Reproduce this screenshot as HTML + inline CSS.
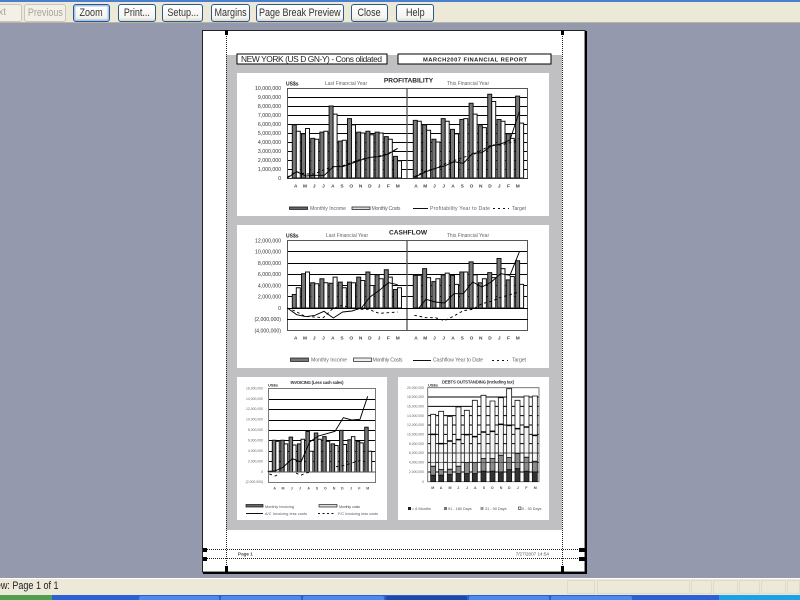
<!DOCTYPE html>
<html><head><meta charset="utf-8"><style>
html,body{margin:0;padding:0;width:800px;height:600px;overflow:hidden;background:#9499ad;font-family:"Liberation Sans",sans-serif}
.bt{position:absolute;top:0;left:0;width:800px;height:23px;background:#ece9d8;border-top:2px solid #4a7fd0;box-sizing:border-box;border-bottom:1px solid #b8b6a8}
.b{position:absolute;top:4px;height:18px;box-sizing:border-box;border:1px solid #2a5a8c;border-radius:3px;background:linear-gradient(#fff,#f4f3ee 80%,#dcd8c8);font-size:11px;line-height:16px;color:#333;filter:blur(.35px);white-space:nowrap;display:flex;justify-content:center;overflow:hidden}
.b span{display:inline-block;flex:none;transform:scaleX(.82)}
.d{color:#a8a698;border-color:#c9c7ba;background:#f3f1e7}
.z{box-shadow:inset 0 0 0 1.5px #a9c4ea}
svg{position:absolute;left:0;top:0}
svg.s{filter:blur(.3px)}
.g path,.g line{vector-effect:non-scaling-stroke}
text{font-family:"Liberation Sans",sans-serif;fill:#333}
.y{font-size:5.2px;text-anchor:end;fill:#777}
.m{font-size:4.8px;font-weight:bold;text-anchor:middle;fill:#444}
.l{font-size:5.2px;fill:#666}
.t{font-size:5px;fill:#666;text-anchor:middle}
.h{font-size:6.6px;font-weight:bold;text-anchor:middle;fill:#222}
.st{position:absolute;left:0;top:578px;width:800px;height:17px;background:#ece9d8;border-top:1px solid #fff;box-sizing:border-box;font-size:11px;line-height:15px;color:#222;overflow:hidden}
.p{position:absolute;top:1px;height:14px;border:1px solid #dedbcb;box-sizing:border-box}
.tk{position:absolute;left:0;top:595px;width:800px;height:5px;background:#2a62d6;overflow:hidden}
.tb{position:absolute;top:1px;height:4px;background:#4c8aec;border-radius:2px 2px 0 0}
</style></head><body>
<div class="bt"></div>
<div class="b d" style="left:-20px;width:42px"><span style="position:absolute;right:15px;transform:none;font-size:10px">Next</span></div>
<div class="b d" style="left:24px;width:42px"><span>Previous</span></div>
<div class="b z" style="left:73px;width:37px"><span>Zoom</span></div>
<div class="b" style="left:118px;width:38px"><span>Print...</span></div>
<div class="b" style="left:162px;width:41px"><span>Setup...</span></div>
<div class="b" style="left:211px;width:39px"><span>Margins</span></div>
<div class="b" style="left:256px;width:88px"><span>Page Break Preview</span></div>
<div class="b" style="left:351px;width:37px"><span>Close</span></div>
<div class="b" style="left:396px;width:38px"><span>Help</span></div>

<svg width="800" height="600" viewBox="0 0 800 600">
<rect x="202.5" y="30.5" width="382.5" height="541.5" fill="#fff" stroke="#222"/>
<path d="M586 31V573H203" fill="none" stroke="#000" stroke-width="2"/>
</svg>
<svg class="s" width="800" height="600" viewBox="0 0 800 600">
<rect x="226" y="55" width="336" height="475" fill="#c0bfc2"/>
<rect x="237" y="54" width="150" height="10" fill="#fff" stroke="#000"/>
<rect x="398" y="54" width="153" height="10" fill="#fff" stroke="#000"/>
<text x="241" y="62" font-size="8.4" textLength="141" style="fill:#222">NEW YORK (US D GN-Y) - Cons olidated</text>
<text x="423" y="61.5" font-size="5.8" font-weight="bold" textLength="104" style="fill:#222">MARCH2007 FINANCIAL REPORT</text>
<rect x="237" y="73" width="312" height="143" fill="#fff"/>
<rect x="237" y="225" width="312" height="143" fill="#fff"/>
<rect x="237" y="377" width="150" height="143" fill="#fff"/>
<rect x="398" y="377" width="151" height="143" fill="#fff"/>

<!-- CHART 1 -->
<path d="M287 169.5H528M287 160.5H528M287 151.500H528M287 142.500H528M287 133.500H528M287 124.500H528M287 115.500H528M287 106.500H528M287 97.500H528" stroke="#000" stroke-width="1"/>
<rect x="287.500" y="88.500" width="240" height="90" fill="none" stroke="#555"/>
<g class="g" transform="translate(0,178) scale(1,-9)" stroke="#111">
<path fill="#777" d="M292.3 0V5.9h4V0zM301.5 0V4.9h4V0zM310.7 0V4.4h4V0zM319.9 0V5.1h4V0zM329.1 0V8h4V0zM338.3 0V4.1h4V0zM347.5 0V6.6h4V0zM356.7 0V5.1h4V0zM365.9 0V5.2h4V0zM375.1 0V5.1h4V0zM384.3 0V4.6h4V0zM393.5 0V2.4h4V0zM413.3 0V6.4h4V0zM422.6 0V5.9h4V0zM431.9 0V4.3h4V0zM441.2 0V6.6h4V0zM450.5 0V5.4h4V0zM459.8 0V6.5h4V0zM469.1 0V8.3h4V0zM478.4 0V5.8h4V0zM487.7 0V9.3h4V0zM497 0V6.5h4V0zM506.3 0V4.9h4V0zM515.6 0V9.1h4V0z"/>
<path fill="#fafafa" d="M296.3 0V5.2h4V0zM305.5 0V5.5h4V0zM314.7 0V4.3h4V0zM323.9 0V5.2h4V0zM333.1 0V7.1h4V0zM342.3 0V4.2h4V0zM351.5 0V5.9h4V0zM360.7 0V5h4V0zM369.9 0V4.8h4V0zM379.1 0V5h4V0zM388.3 0V4.3h4V0zM397.5 0V1.9h4V0zM417.3 0V6.3h4V0zM426.6 0V5.3h4V0zM435.9 0V4h4V0zM445.2 0V6.3h4V0zM454.5 0V4.9h4V0zM463.8 0V6.6h4V0zM473.1 0V7.1h4V0zM482.4 0V5.6h4V0zM491.7 0V8.5h4V0zM501 0V6.3h4V0zM510.3 0V4.4h4V0zM519.6 0V6.1h4V0z"/>
</g>
<path d="M407 88V178" stroke="#555" stroke-width="1.3"/>
<path d="M287 178.5H528" stroke="#333" stroke-width="1"/>
<g transform="translate(230,70) scale(.3333)" fill="none" stroke="#000">
<path stroke-width="2.8" d="M172 324L200 305 228 318 255 316 283 316 310 290 338 290 366 280 394 270 420 262 448 260 476 252 503 235M553 322L588 305 616 295 644 288 672 275 700 280 728 250 756 248 784 228 812 222 840 210 868 125"/>
<path stroke-width="2.8" stroke-dasharray="8 8" d="M172 322L197 305 225 312 253 312 280 300 308 290 336 288 364 278 392 268 420 262 448 258 476 250 503 235M553 320L588 303 616 296 644 282 672 272 700 262 728 255 756 240 784 225 812 225 840 218 868 205"/>
</g>
<g class="y"><text x="281" y="90">10,000,000</text><text x="281" y="99">9,000,000</text><text x="281" y="108">8,000,000</text><text x="281" y="117">7,000,000</text><text x="281" y="126">6,000,000</text><text x="281" y="135">5,000,000</text><text x="281" y="144">4,000,000</text><text x="281" y="153">3,000,000</text><text x="281" y="162">2,000,000</text><text x="281" y="171">1,000,000</text><text x="281" y="180">0</text></g>
<text class="m" y="187.6" x="295.7 305 314.2 323.5 332.8 342 351.3 360.6 369.9 379.1 388.4 397.7 416 425.2 434.5 443.7 453 462.2 471.5 480.7 490 499.2 508.5 517.7">AMJJASONDJFMAMJJASONDJFM</text>
<text x="286" y="85.5" font-size="5" font-weight="bold" style="fill:#222">US$s</text>
<text class="t" x="346" y="85">Last Financial Year</text>
<text class="t" x="468" y="85">This Financial Year</text>
<text class="h" x="408.5" y="82.5">PROFITABILITY</text>
<rect x="289.5" y="207" width="18" height="2.4" fill="#666" stroke="#111" stroke-width=".8"/>
<text class="l" x="310" y="210" textLength="36">Monthly Income</text>
<rect x="352" y="207" width="18" height="2.4" fill="#ddd" stroke="#222" stroke-width=".8"/>
<text class="l" x="371.5" y="210" textLength="29">Monthly Costs</text>
<path d="M413 208.5H428" stroke="#111"/>
<text class="l" x="430" y="210" textLength="60">Profitability Year to Date</text>
<path d="M493 208.5H509" stroke="#111" stroke-dasharray="2 3"/>
<text class="l" x="512" y="210" textLength="14">Target</text>

<!-- CHART 2 -->
<path d="M287 319.500H528M287 308.500H528M287 296.500H528M287 285.500H528M287 274.500H528M287 263.500H528M287 251.500H528" stroke="#000" stroke-width="1"/>
<rect x="287.500" y="240.500" width="240" height="90" fill="none" stroke="#555"/>
<g class="g" transform="translate(0,308) scale(1,-5.625)" stroke="#111">
<path fill="#777" d="M292.3 0V2.4h4V0zM301.5 0V6.1h4V0zM310.7 0V4.5h4V0zM319.9 0V5.2h4V0zM329.1 0V4.4h4V0zM338.3 0V4.6h4V0zM347.5 0V4.6h4V0zM356.7 0V5.5h4V0zM365.9 0V6.4h4V0zM375.1 0V5.9h4V0zM384.3 0V6.8h4V0zM393.5 0V3.3h4V0zM413.3 0V5.8h4V0zM422.6 0V7h4V0zM431.9 0V4.7h4V0zM441.2 0V5.9h4V0zM450.5 0V5.8h4V0zM459.8 0V6.4h4V0zM469.1 0V8.2h4V0zM478.4 0V4.5h4V0zM487.7 0V6.3h4V0zM497 0V8.8h4V0zM506.3 0V5h4V0zM515.6 0V8.4h4V0z"/>
<path fill="#fafafa" d="M296.3 0V3.6h4V0zM305.5 0V6.4h4V0zM314.7 0V4.3h4V0zM323.9 0V4.5h4V0zM333.1 0V5.5h4V0zM342.3 0V3.6h4V0zM351.5 0V4.5h4V0zM360.7 0V4.9h4V0zM369.9 0V4h4V0zM379.1 0V5.2h4V0zM388.3 0V5.5h4V0zM397.5 0V3.6h4V0zM417.3 0V5.8h4V0zM426.6 0V5.4h4V0zM435.9 0V5.2h4V0zM445.2 0V6.2h4V0zM454.5 0V4.2h4V0zM463.8 0V6.4h4V0zM473.1 0V5.9h4V0zM482.4 0V5.2h4V0zM491.7 0V5.4h4V0zM501 0V7h4V0zM510.3 0V5.6h4V0zM519.6 0V4.2h4V0z"/>
</g>
<path d="M407 240.5V330.5" stroke="#555" stroke-width="1.3"/>
<path d="M287 308.5H528M287 319.5H528" stroke="#000" stroke-width="1"/>
<g transform="translate(230,222) scale(.3333)" fill="none" stroke="#000">
<path stroke-width="2.8" d="M172 258L200 278 228 284 255 280 282 268 310 288 338 270 366 267 394 258 420 225 448 205 476 182 503 188M553 258L567 258 588 232 616 240 644 243 672 215 700 215 728 180 756 195 784 180 812 155 840 160 868 90"/>
<path stroke-width="2.8" stroke-dasharray="8 8" d="M172 258L197 268 225 283 253 285 280 287 308 260 336 250 364 258 392 262 420 262 430 268 448 274 476 272 503 270M553 280L588 287 616 287 644 296 672 282 700 266 728 262 756 245 784 238 812 226 840 218 868 210"/>
</g>
<g class="y"><text x="281" y="242.5">12,000,000</text><text x="281" y="253.7">10,000,000</text><text x="281" y="265">8,000,000</text><text x="281" y="276.2">6,000,000</text><text x="281" y="287.5">4,000,000</text><text x="281" y="298.7">2,000,000</text><text x="281" y="310">0</text><text x="281" y="321.2">(2,000,000)</text><text x="281" y="332.5">(4,000,000)</text></g>
<text class="m" y="339.6" x="295.7 305 314.2 323.5 332.8 342 351.3 360.6 369.9 379.1 388.4 397.7 416 425.2 434.5 443.7 453 462.2 471.5 480.7 490 499.2 508.5 517.7">AMJJASONDJFMAMJJASONDJFM</text>
<text x="286" y="237.5" font-size="5" font-weight="bold" style="fill:#222">US$s</text>
<text class="t" x="347" y="237">Last Financial Year</text>
<text class="t" x="468" y="237">This Financial Year</text>
<text class="h" x="408" y="234.5">CASHFLOW</text>
<rect x="290.5" y="358" width="18" height="3.5" fill="#777" stroke="#111" stroke-width=".7"/>
<text class="l" x="311" y="361.5" textLength="36">Monthly Income</text>
<rect x="353.5" y="358" width="18" height="3.5" fill="#eee" stroke="#222" stroke-width=".7"/>
<text class="l" x="372.5" y="361.5" textLength="30">Monthly Costs</text>
<path d="M413 360.5H431" stroke="#111"/>
<text class="l" x="433" y="361.5" textLength="50">Cashflow Year to Date</text>
<path d="M492 360.5H508" stroke="#111" stroke-dasharray="2 3"/>
<text class="l" x="512" y="361.5" textLength="14">Target</text>

<!-- CHART 3 -->
<path d="M268 461.5H376M268 451.5H376M268 440.5H376M268 430.5H376M268 420.5H376M268 409.5H376M268 399.5H376M268 388.5H376" stroke="#000" stroke-width="1"/>
<rect x="268.5" y="388.5" width="107" height="94" fill="none" stroke="#777"/>
<g class="g" transform="translate(0,472) scale(1,-5.2)" stroke="#111">
<path fill="#777" d="M272.3 0V6.1h3.5V0zM280.7 0V6.1h3.5V0zM289.1 0V6.7h3.5V0zM297.5 0V5.4h3.5V0zM305.9 0V7.8h3.5V0zM314.3 0V7.5h3.5V0zM322.7 0V6.8h3.5V0zM331.1 0V5.4h3.5V0zM339.5 0V8h3.5V0zM347.9 0V6.2h3.5V0zM356.3 0V5.9h3.5V0zM364.7 0V8.6h3.5V0z"/>
<path fill="#fafafa" d="M275.8 0V5.9h3.5V0zM284.2 0V5.4h3.5V0zM292.6 0V5.2h3.5V0zM301 0V6.3h3.5V0zM309.4 0V4h3.5V0zM317.8 0V6.3h3.5V0zM326.2 0V5.9h3.5V0zM334.6 0V5.1h3.5V0zM343 0V5.3h3.5V0zM351.4 0V6.8h3.5V0zM359.8 0V5.6h3.5V0zM368.2 0V4h3.5V0z"/>
</g>
<path d="M268 472H376" stroke="#555" stroke-width="1"/>
<g transform="translate(230,372) scale(.3333)" fill="none" stroke="#000">
<path stroke-width="2.8" d="M113 298L135 297 160 285 187 260 213 270 239 210 265 192 290 185 315 178 340 137 365 144 390 142 413 73"/>
<path stroke-width="2.8" stroke-dasharray="8 9" d="M118 306L135 312 150 305M198 303L212 310 228 303 242 300M318 284L345 280 375 270 400 263"/>
</g>
<g font-size="3.4" text-anchor="end">
<text x="263" y="389.5" style="fill:#666">16,000,000</text><text x="263" y="399.8" style="fill:#666">14,000,000</text><text x="263" y="410.2" style="fill:#666">12,000,000</text><text x="263" y="420.5" style="fill:#666">10,000,000</text><text x="263" y="431" style="fill:#666">8,000,000</text><text x="263" y="441.3" style="fill:#666">6,000,000</text><text x="263" y="452" style="fill:#666">4,000,000</text><text x="263" y="462.3" style="fill:#666">2,000,000</text><text x="263" y="472.8" style="fill:#666">0</text><text x="263" y="483" style="fill:#666">(2,000,000)</text></g>
<text font-size="3.6" font-weight="bold" text-anchor="middle" y="489.5" x="274.7 283 291.7 300 308.7 317 325.3 334 342.3 351 359.3 367.7" style="fill:#555">AMJJASONDJFM</text>
<text x="268" y="386.5" font-size="4" font-weight="bold" style="fill:#333">US$s</text>
<text x="317" y="384" font-size="4.2" font-weight="bold" text-anchor="middle" textLength="53" style="fill:#333">INVOICING (Less cash sales)</text>
<rect x="246" y="504.5" width="17" height="2.5" fill="#666" stroke="#111" stroke-width=".7"/>
<text x="265" y="508" font-size="3.8" textLength="29" style="fill:#555">Monthly Invoicing</text>
<rect x="319" y="504.5" width="18" height="2.5" fill="#ddd" stroke="#222" stroke-width=".7"/>
<text x="339" y="508" font-size="3.8" textLength="21" style="fill:#555">Monthly, costs</text>
<path d="M246 513.5H263" stroke="#111"/>
<text x="265" y="515" font-size="3.8" textLength="42" style="fill:#555">A/C Invoicing less costs</text>
<path d="M318 513.5H336" stroke="#111" stroke-dasharray="2 2.5"/>
<text x="338" y="515" font-size="3.8" textLength="40" style="fill:#555">F/C Invoicing less costs</text>

<!-- CHART 4 -->
<g transform="translate(395,372) scale(.3333)">
<path d="M98 75H432M98 103H432M98 131H432M98 159H432M98 187H432M98 215H432M98 243H432M98 271H432M98 300H432" stroke="#000" stroke-width="3"/>
<rect x="98" y="47" width="334" height="282" fill="none" stroke="#777" stroke-width="3"/>
<g stroke="#111" stroke-width="2.4">
<path fill="#fff" d="M107 187V127h15V187zM131 215V118h15V215zM157 207V134h15V207zM183 203V105h15V203zM208 188V115h15V188zM232 194V85h15V194zM258 180V70h15V180zM285 178V87h15V178zM310 157V77h15V157zM335 160V50h15V160zM360 170V85h15V170zM387 165V72h15V165zM412 190V72h15V190z"/>
<path fill="#f4f4f4" d="M107 283V187h15V283zM131 293V215h15V293zM157 292V207h15V292zM183 283V203h15V283zM208 272V188h15V272zM232 272V194h15V272zM258 260V180h15V260zM285 260V178h15V260zM310 250V157h15V250zM335 257V160h15V257zM360 245V170h15V245zM387 256V165h15V256zM412 268V190h15V268z"/>
<path fill="#8c8c8c" d="M107 310V283h15V310zM131 310V293h15V310zM157 308V292h15V308zM183 305V283h15V305zM208 305V272h15V305zM232 305V272h15V305zM258 298V260h15V298zM285 298V260h15V298zM310 300V250h15V300zM335 293V257h15V293zM360 290V245h15V290zM387 298V256h15V298zM412 300V268h15V300z"/>
<path fill="#333" d="M107 329V310h15V329zM131 329V310h15V329zM157 329V308h15V329zM183 329V305h15V329zM208 329V305h15V329zM232 329V305h15V329zM258 329V298h15V329zM285 329V298h15V329zM310 329V300h15V329zM335 329V293h15V329zM360 329V290h15V329zM387 329V298h15V329zM412 329V300h15V329z"/>
</g>
<path d="M107 187h15M131 215h15M157 207h15M183 203h15M208 188h15M232 194h15M258 180h15M285 178h15M310 157h15M335 160h15M360 170h15M387 165h15M412 190h15" stroke="#000" stroke-width="4.5"/>
<path d="M98 243H432M98 271H432" stroke="#333" stroke-width="2"/>
</g>
<g font-size="3.4" text-anchor="end">
<text x="424" y="388.8" style="fill:#666">20,000,000</text><text x="424" y="398" style="fill:#666">18,000,000</text><text x="424" y="407.5" style="fill:#666">16,000,000</text><text x="424" y="416.8" style="fill:#666">14,000,000</text><text x="424" y="426" style="fill:#666">12,000,000</text><text x="424" y="435.5" style="fill:#666">10,000,000</text><text x="424" y="445" style="fill:#666">8,000,000</text><text x="424" y="454" style="fill:#666">6,000,000</text><text x="424" y="463.5" style="fill:#666">4,000,000</text><text x="424" y="473" style="fill:#666">2,000,000</text><text x="424" y="483" style="fill:#666">0</text></g>
<text font-size="3.6" font-weight="bold" text-anchor="middle" y="488.8" x="432.7 441 450 458.3 467 475.3 484 492.3 501 509.3 517.7 526.3 535.3" style="fill:#555">MAMJJASONDJFM</text>
<text x="428" y="386.5" font-size="4" font-weight="bold" style="fill:#333">US$s</text>
<text x="478" y="383.5" font-size="4.2" font-weight="bold" text-anchor="middle" textLength="72" style="fill:#333">DEBTS OUTSTANDING (including tax)</text>
<rect x="408" y="507" width="3" height="3" fill="#222"/><text x="412" y="510" font-size="3.8" style="fill:#555">&gt; 6 Months</text>
<rect x="444" y="507" width="3" height="3" fill="#777"/><text x="448" y="510" font-size="3.8" style="fill:#555">91 - 180 Days</text>
<rect x="480.5" y="507" width="3" height="3" fill="#999"/><text x="485" y="510" font-size="3.8" style="fill:#555">31 - 90 Days</text>
<rect x="518.5" y="507" width="2.5" height="2.5" fill="#fff" stroke="#222" stroke-width=".6"/><text x="522" y="510" font-size="3.8" style="fill:#555">0 - 30 Days</text>
<text x="238" y="555.5" font-size="4.6" font-weight="bold" style="fill:#444">Page 1</text>
<text x="549" y="555.5" font-size="4.6" text-anchor="end" style="fill:#555">7/27/2007 14:54</text>
</svg>

<svg width="800" height="600" viewBox="0 0 800 600">
<g stroke="#222" fill="none" stroke-dasharray="1 1">
<path d="M226.5 30V572M562.5 30V572"/>
<path d="M203 549.5H585M203 558.5H585"/>
</g>
<g fill="#000">
<rect x="225" y="30" width="3" height="5"/><rect x="561" y="30" width="3" height="5"/>
<rect x="225" y="566" width="3" height="6"/><rect x="561" y="566" width="3" height="6"/>
<rect x="203" y="548" width="4" height="4"/><rect x="203" y="557" width="4" height="4"/>
<rect x="579" y="548" width="6" height="4"/><rect x="579" y="557" width="6" height="4"/>
</g>
</svg>

<div class="st"><span style="position:absolute;right:741px;white-space:nowrap;filter:blur(.25px);transform:scaleX(.82);transform-origin:right center">Preview: Page 1 of 1</span>
<div class="p" style="left:567px;width:28px"></div><div class="p" style="left:597px;width:93px"></div><div class="p" style="left:691px;width:21px"></div><div class="p" style="left:713px;width:25px"></div><div class="p" style="left:739px;width:21px"></div><div class="p" style="left:761px;width:25px"></div><div class="p" style="left:787px;width:13px"></div></div>
<div class="tk">
<div style="position:absolute;left:0;top:0;width:52px;height:5px;background:#4f9f4f"></div>
<div class="tb" style="left:139px;width:80px"></div><div class="tb" style="left:221px;width:80px"></div><div class="tb" style="left:303px;width:81px"></div><div class="tb" style="left:386px;width:81px;background:#1c4aa8"></div><div class="tb" style="left:469px;width:80px"></div><div class="tb" style="left:551px;width:81px"></div>
<div style="position:absolute;left:719px;top:0;width:81px;height:5px;background:#17a3e6"></div>
</div>
</body></html>
